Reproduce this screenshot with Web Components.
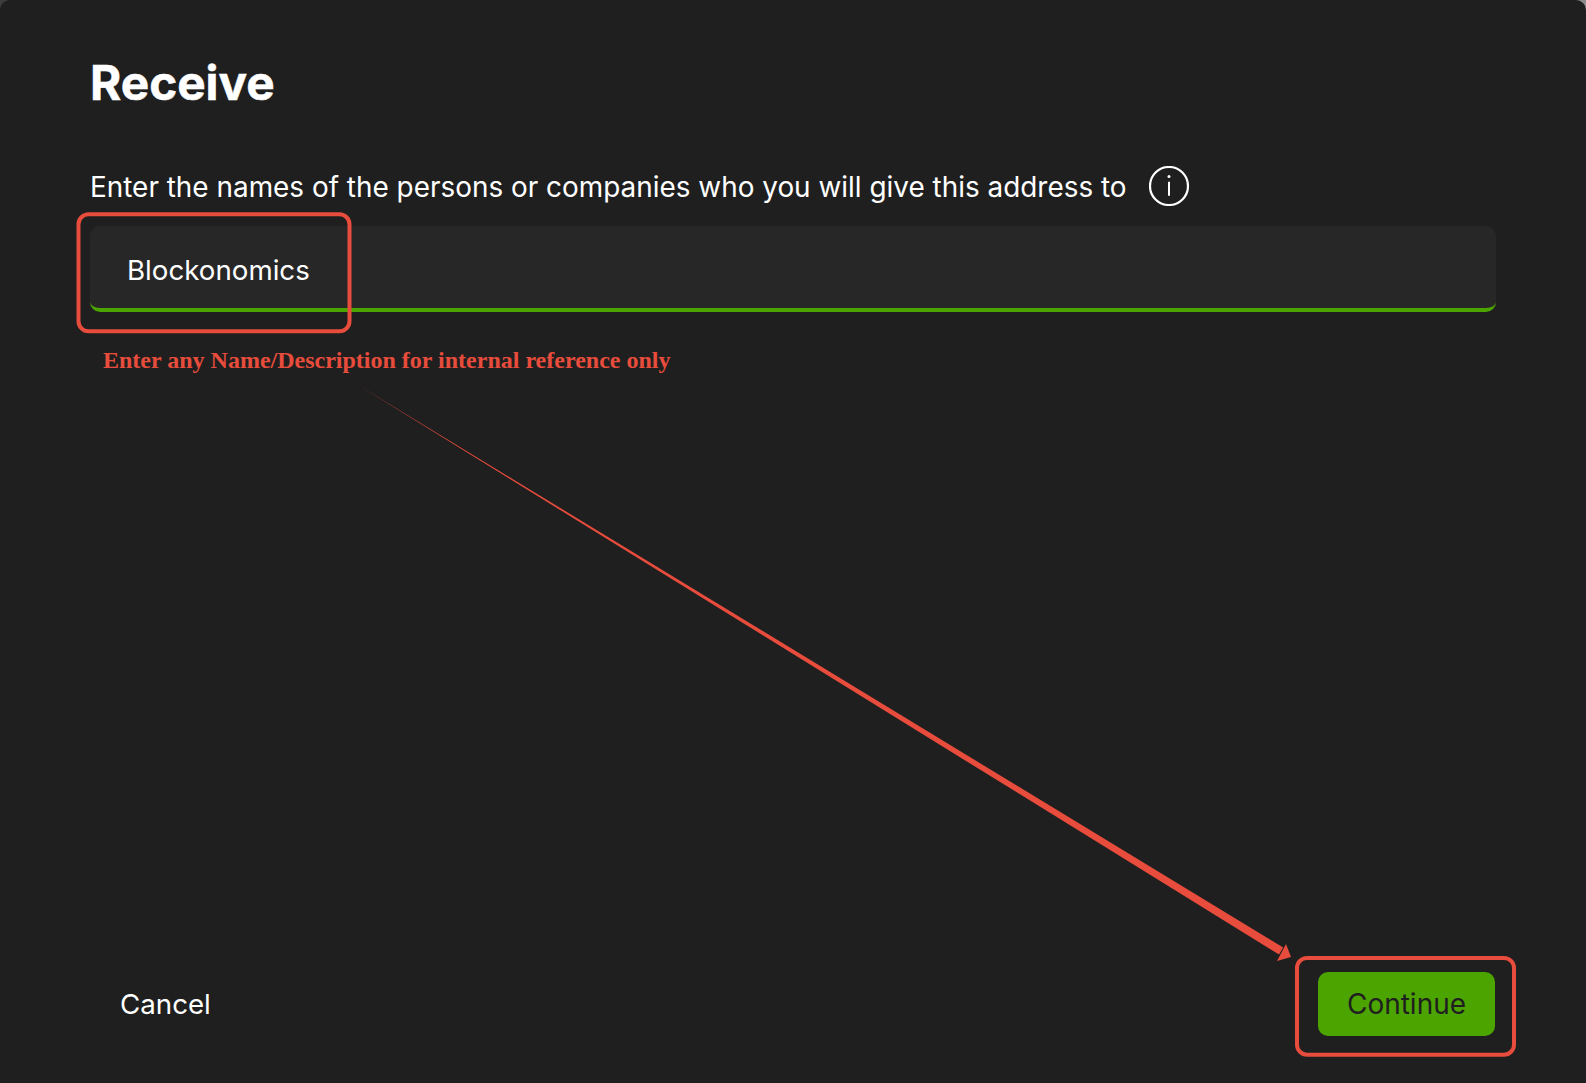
<!DOCTYPE html>
<html>
<head>
<meta charset="utf-8">
<title>Receive</title>
<style>
  html, body { margin: 0; height: 100%; }
  body { background: linear-gradient(90deg, #3c3c3c, #8c8c8c); }
</style>
</head>
<body>
<receive-dialog>
  <span slot="title">Receive</span>
  <span slot="label">Enter the names of the persons or companies who you will give this address to</span>
  <name-field slot="field">Blockonomics</name-field>
  <span slot="note">Enter any Name/Description for internal reference only</span>
  <span slot="cancel">Cancel</span>
  <green-button slot="confirm">Continue</green-button>
</receive-dialog>

<script>
// Dialog shell, annotations are drawn over it in one svg.
const dialogTemplate = document.createElement('template')
dialogTemplate.innerHTML = `
 <style>
   :host {
     display: flex;
     flex-direction: column;
     position: relative;
     box-sizing: border-box;
     width: 1586px;
     height: 1083px;
     padding: 54px 90px 47px 90px;
     background: #1f1f1f;
     border-radius: 10px 10px 0 0;
     color: #fff;
     font-family: Inter, sans-serif;
     overflow: hidden;
   }
   h1 {
     margin: 0 0 54px;
     font-size: 47.7px;
     line-height: 58px;
     font-weight: 700;
     -webkit-text-stroke: 0.5px #fff;
   }
   .label {
     display: flex;
     align-items: center;
     gap: 22px;
     height: 40px;
     margin-bottom: 20px;
     font-size: 27.92px;
   }
   .label span { position: relative; top: 1px; }
   .note {
     margin: 34px 0 0 13px;
     font: bold 24px/28px "Liberation Serif", serif;
     color: #e74c3c;
   }
   .actions {
     display: flex;
     justify-content: space-between;
     align-items: center;
     margin-top: auto;
     font-size: 27.7px;
   }
   .cancel { margin-left: 30px; }
   .marks { position: absolute; left: 0; top: 0; pointer-events: none; }
 </style>
 <h1><slot name="title"></slot></h1>
 <div class="label">
   <span><slot name="label"></slot></span>
   <svg width="40" height="40" viewBox="0 0 40 40" fill="none" stroke="#fff">
     <circle cx="20" cy="20" r="19" stroke-width="2.2"/>
     <circle cx="20" cy="10.5" r="1.5" fill="#fff" stroke="none"/>
     <path d="M20 15.7v14" stroke-width="2"/>
   </svg>
 </div>
 <slot name="field"></slot>
 <div class="note"><slot name="note"></slot></div>
 <div class="actions">
   <div class="cancel"><slot name="cancel"></slot></div>
   <slot name="confirm"></slot>
 </div>
 <svg class="marks" width="1586" height="1083" viewBox="0 0 1586 1083" fill="none">
   <rect x="78.5" y="214.3" width="271" height="117" rx="10" stroke="#e74c3c" stroke-width="4"/>
   <rect x="1297" y="958" width="217" height="96.7" rx="10" stroke="#e74c3c" stroke-width="4"/>
   <path d="M358 385 L1283.2 947.5 L1279 954.5 Z" fill="#e74c3c"/>
   <path d="M1291 957 L1277 961 L1286 944 Z" fill="#e74c3c"/>
 </svg>
`

customElements.define('receive-dialog',
  /**
   * The receive dialog.
   */
  class ReceiveDialog extends HTMLElement {
    /**
     * Creates an instance of the current type.
     */
    constructor () {
      super()
      this.attachShadow({ mode: 'open' })
        .appendChild(dialogTemplate.content.cloneNode(true))
    }
  }
)

const fieldTemplate = document.createElement('template')
fieldTemplate.innerHTML = `
 <style>
   :host {
     display: flex;
     align-items: center;
     box-sizing: border-box;
     height: 86px;
     padding: 6px 37px 0;
     background: #272727;
     border-bottom: 4px solid #4ca400;
     border-radius: 10px;
     font-size: 27.7px;
     color: #fff;
   }
 </style>
 <slot></slot>
`

customElements.define('name-field',
  /**
   * The name input with the green underline.
   */
  class NameField extends HTMLElement {
    /**
     * Creates an instance of the current type.
     */
    constructor () {
      super()
      this.attachShadow({ mode: 'open' })
        .appendChild(fieldTemplate.content.cloneNode(true))
    }
  }
)

const buttonTemplate = document.createElement('template')
buttonTemplate.innerHTML = `
 <style>
   :host {
     display: flex;
     align-items: center;
     justify-content: center;
     width: 177px;
     height: 64px;
     margin-right: 1px;
     background: #4ca400;
     border-radius: 10px;
     font-size: 28px;
     color: #1f1f1f;
   }
 </style>
 <slot></slot>
`

customElements.define('green-button',
  /**
   * The green call to action.
   */
  class GreenButton extends HTMLElement {
    /**
     * Creates an instance of the current type.
     */
    constructor () {
      super()
      this.attachShadow({ mode: 'open' })
        .appendChild(buttonTemplate.content.cloneNode(true))
    }
  }
)
</script>
</body>
</html>
